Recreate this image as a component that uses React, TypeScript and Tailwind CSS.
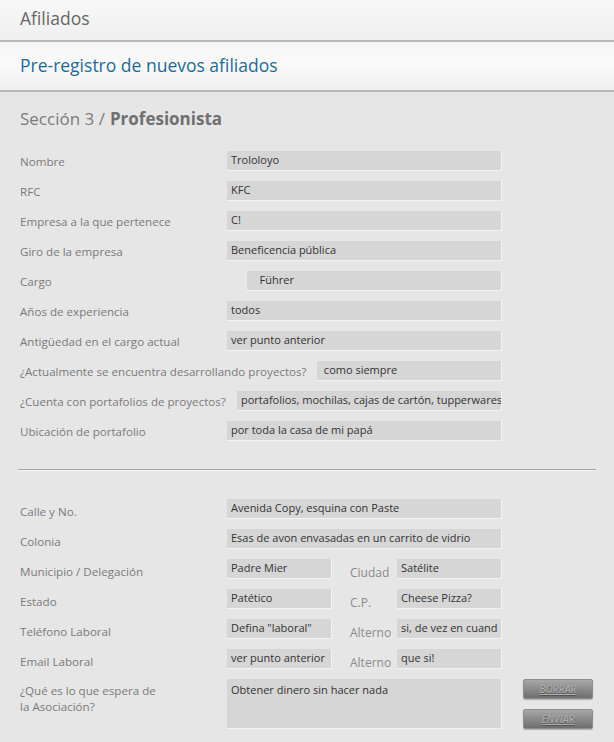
import React from "react";

const inputCls =
  "h-[20px] bg-[#d6d6d6] border-b border-r border-[#f3f3f3] pl-[4px] flex items-center text-[11px] text-[#333] overflow-hidden whitespace-nowrap";

function Row({ label, value, w }: { label: string; value: string; w: string }) {
  return (
    <div className="h-[30px] w-[482px] flex items-center justify-between">
      <span className="text-[11.6px] text-[#7a7a7a] whitespace-nowrap pt-[1px]">{label}</span>
      <div className={`${inputCls} ${w}`}>{value}</div>
    </div>
  );
}

function Row2({ label, value }: { label: string; value: string }) {
  return (
    <div className="h-[30px] w-[482px] flex items-center justify-between">
      <span className="text-[11.6px] text-[#7a7a7a] whitespace-nowrap pt-[6px]">{label}</span>
      <div className={`${inputCls} w-[275px]`}>{value}</div>
    </div>
  );
}

function RowSplit({
  label,
  v1,
  label2,
  v2,
}: {
  label: string;
  v1: string;
  label2: string;
  v2: string;
}) {
  return (
    <div className="h-[30px] w-[482px] flex items-center">
      <span className="text-[11.6px] text-[#7a7a7a] whitespace-nowrap pt-[6px] w-[207px]">{label}</span>
      <div className={`${inputCls} w-[105px]`}>{v1}</div>
      <span className="text-[12px] text-[#8a8a8a] whitespace-nowrap pt-[8px] w-[65px] pl-[18px]">{label2}</span>
      <div className={`${inputCls} w-[105px]`}>{v2}</div>
    </div>
  );
}

export default function App() {
  return (
    <div
      className="w-[614px] h-[742px] bg-[#e6e6e6] overflow-hidden"
      style={{ fontFamily: '"Open Sans", "DejaVu Sans", sans-serif' }}
    >
      <div className="h-[42px] border-b-2 border-[#b9b9b9] bg-gradient-to-b from-[#f8f8f8] to-[#efefef] flex items-center pl-[20px]">
        <span className="text-[17.5px] text-[#666] pb-[3px]">Afiliados</span>
      </div>
      <div className="h-[50px] border-b-2 border-[#b9b9b9] bg-gradient-to-b from-[#f6f6f6] via-[#fafafa] to-[#efefef] flex items-center pl-[20px]">
        <span className="text-[17.5px] text-[#1b6a97] pb-[1px]">Pre-registro de nuevos afiliados</span>
      </div>
      <div className="px-[20px] pt-[15px]">
        <div className="h-[24px] flex items-center text-[17px] text-[#7b7b7b] mb-[15px]">
          <span>Sección 3 / </span>
          <span className="font-bold text-[#707070] ml-[5px]">Profesionista</span>
        </div>
        <Row label="Nombre" value="Trololoyo" w="w-[275px]" />
        <Row label="RFC" value="KFC" w="w-[275px]" />
        <Row label="Empresa a la que pertenece" value="C!" w="w-[275px]" />
        <Row label="Giro de la empresa" value="Beneficencia pública" w="w-[275px]" />
        <Row label="Cargo" value={"\u00a0\u00a0\u00a0Führer"} w="w-[255px]" />
        <Row label="Años de experiencia" value="todos" w="w-[275px]" />
        <Row label="Antigüedad en el cargo actual" value="ver punto anterior" w="w-[275px]" />
        <Row
          label="¿Actualmente se encuentra desarrollando proyectos?"
          value={"\u00a0como siempre"}
          w="w-[185px]"
        />
        <Row
          label="¿Cuenta con portafolios de proyectos?"
          value="portafolios, mochilas, cajas de cartón, tupperwares"
          w="w-[265px]"
        />
        <Row label="Ubicación de portafolio" value="por toda la casa de mi papá" w="w-[275px]" />
      </div>
      <div className="mx-[18px] mt-[23px] border-t border-[#a6a6a6] border-b border-b-[#f4f4f4]" />
      <div className="px-[20px] pt-[23px]">
        <Row2 label="Calle y No." value="Avenida Copy, esquina con Paste" />
        <Row2 label="Colonia" value="Esas de avon envasadas en un carrito de vidrio" />
        <RowSplit label="Municipio / Delegación" v1="Padre Mier" label2="Ciudad" v2="Satélite" />
        <RowSplit label="Estado" v1="Patético" label2="C.P." v2="Cheese Pizza?" />
        <RowSplit label="Teléfono Laboral" v1={'Defina "laboral"'} label2="Alterno" v2="si, de vez en cuand" />
        <RowSplit label="Email Laboral" v1="ver punto anterior" label2="Alterno" v2="que si!" />
        <div className="flex mt-[5px]">
          <div className="w-[207px] text-[11.6px] leading-[16px] text-[#7a7a7a] pt-[4px]">
            ¿Qué es lo que espera de
            <br />
            la Asociación?
          </div>
          <div className="w-[275px] h-[50px] bg-[#d6d6d6] border-b border-r border-[#f3f3f3] pl-[4px] pt-[3px] text-[11px] text-[#333]">
            Obtener dinero sin hacer nada
          </div>
          <div className="ml-[21px] flex flex-col gap-[10px]">
            <div className="w-[70px] h-[20px] rounded-[2px] border border-[#8d8d8d] bg-gradient-to-b from-[#a8a8a8] to-[#6e6e6e] shadow-[0_1px_1px_rgba(0,0,0,0.25)] flex items-center justify-center text-[10px] italic font-semibold underline text-[#adadad] [text-shadow:0_1px_0_#555]">
              BORRAR
            </div>
            <div className="w-[70px] h-[20px] rounded-[2px] border border-[#8d8d8d] bg-gradient-to-b from-[#a8a8a8] to-[#6e6e6e] shadow-[0_1px_1px_rgba(0,0,0,0.25)] flex items-center justify-center text-[10px] italic font-semibold underline text-[#adadad] [text-shadow:0_1px_0_#555]">
              ENVIAR
            </div>
          </div>
        </div>
      </div>
    </div>
  );
}
